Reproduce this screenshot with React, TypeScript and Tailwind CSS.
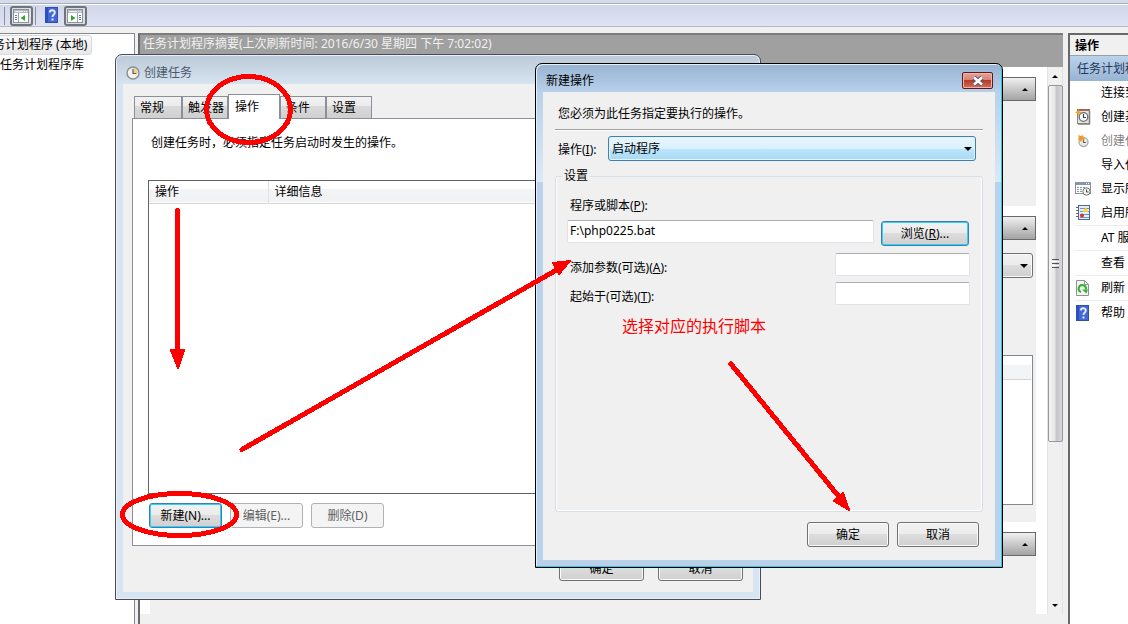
import { useState } from 'react'
import type { ReactNode } from 'react'
import clsx from 'clsx'

const TABS = [
  { name: '常规', width: 'w-12' },
  { name: '触发器', width: 'w-[46px]' },
  { name: '操作', width: 'w-[52px]' },
  { name: '条件', width: 'w-[46px]' },
  { name: '设置', width: 'w-[46px]' },
]

/* ---------- icons ---------- */

function ClockIcon() {
  return (
    <svg width="14" height="14" viewBox="0 0 14 14" fill="none">
      <circle cx="7" cy="7" r="6" fill="#f3f1ea" stroke="#8a8d90" strokeWidth="1.4" />
      <path d="M7 7V2a5 5 0 0 1 5 5z" fill="#f5cf85" />
      <path d="M7 3v4.5h3.5" stroke="#55606b" strokeWidth="1.2" />
    </svg>
  )
}

function HelpIcon() {
  return (
    <svg width="14" height="17" viewBox="0 0 14 17" fill="none">
      <rect x="0.5" y="0.5" width="12" height="15" fill="#4567d6" stroke="#2f4ea8" />
      <rect x="0" y="0" width="3" height="16" fill="#2a50c0" />
      <path d="M4.8 5.6C4.8 2.4 9.800 2.500 9.800 5.400c0 2.300-2.400 2.300-2.400 4.600" stroke="#e6ecff" strokeWidth="1.900" />
      <rect x="6.500" y="11.500" width="2" height="2" fill="#e6ecff" />
    </svg>
  )
}

function PaneIcon({ side }: { side: 'left' | 'right' }) {
  const left = side === 'left'
  return (
    <svg width="17" height="14" viewBox="0 0 17 14" fill="none">
      <rect x="0.5" y="0.5" width="15" height="13" fill="#fff" stroke="#8c9196" />
      <rect x="1" y="1" width="14" height="3" fill="#b5babf" />
      <path d="M2 2.500h8M11 2.500h1M13 2.500h1" stroke="#eef1f3" />
      <path d={left ? 'M5.500 4v9' : 'M10.500 4v9'} stroke="#9aa0a5" />
      <path d={left ? 'M2 6.500h2M2 8.500h2M2 10.500h2' : 'M12 6.500h2M12 8.500h2M12 10.500h2'} stroke="#4a7ab5" />
      <path d={left ? 'M12 6v6L7.500 9z' : 'M4 6v6l4.500-3z'} fill="#35a82b" />
    </svg>
  )
}

function BasicTaskIcon() {
  return (
    <svg width="16" height="16" viewBox="0 0 16 16" fill="none">
      <rect x="2.500" y="1.500" width="12" height="13" fill="#e9e5e2" stroke="#8b8583" />
      <path d="M2 1h13" stroke="#a0675d" strokeWidth="2" />
      <path d="M14.500 2v13M3 15h12" stroke="#857d7a" strokeWidth="1.500" />
      <circle cx="8.500" cy="8" r="4.300" fill="#fff" stroke="#66707a" strokeWidth="1.300" />
      <path d="M8.500 5v3.500H11" stroke="#3c454e" strokeWidth="1.200" />
      <path d="M3.500 0l1 2.300L7 3.500l-2.500 1L3.500 7l-1-2.500L0 3.500l2.500-1.200z" fill="#f6a623" />
    </svg>
  )
}

function NewTaskIcon() {
  return (
    <svg width="16" height="16" viewBox="0 0 16 16" fill="none">
      <circle cx="8.500" cy="9" r="4.500" fill="#f3ead2" stroke="#a3b3c2" strokeWidth="1.400" />
      <path d="M8.500 6.500v3H11" stroke="#5f6a74" strokeWidth="1.200" />
      <path d="M3 2l3 1L8 2l.5 2.500 2 1.500-3 .5L6 9 4.500 7 3 6.500l.8-2z" fill="#f2982a" />
    </svg>
  )
}

function ShowTasksIcon() {
  return (
    <svg width="16" height="14" viewBox="0 0 16 14" fill="none">
      <rect x="0.500" y="0.500" width="15" height="11" fill="#fff" stroke="#8b9298" />
      <rect x="0" y="0" width="16" height="3" fill="#8796a8" />
      <path d="M11 1.500h1M13 1.500h1" stroke="#fff" />
      <path d="M2 5.500h2m1 0h2m1 0h2M2 7.500h2m1 0h2M2 9.500h2m1 0h2" stroke="#8d959c" />
      <circle cx="11.500" cy="9.500" r="3.700" fill="#f4f1e4" stroke="#6d7983" />
      <path d="M11.500 7.500v2.500h2" stroke="#44505a" />
    </svg>
  )
}

function HistoryIcon() {
  return (
    <svg width="14" height="16" viewBox="0 0 14 16" fill="none">
      <rect x="2.500" y="0.500" width="11" height="14" fill="#e4effb" stroke="#47699c" />
      <path d="M4 3.500h9M4 6.500h9M4 9.500h9M4 12.500h9" stroke="#6f95c8" />
      <path d="M0 2.500h3M0 5.500h3M0 8.500h3M0 11.500h3" stroke="#666" />
      <path d="M9.500 2l3 5h-6z" fill="#f5d327" />
      <circle cx="6" cy="10.500" r="2" fill="#d8352f" />
    </svg>
  )
}

function RefreshIcon() {
  return (
    <svg width="14" height="16" viewBox="0 0 14 16" fill="none">
      <path d="M0.500 0.500h8l4 4v11h-12z" fill="#f5f7f5" stroke="#8d9193" />
      <path d="M8.500 0.500v4h4" stroke="#95999b" />
      <path d="M5 12A3.600 3.600 0 1 1 9.800 9.500" stroke="#2fb02a" strokeWidth="2" />
      <path d="M6 9.500h6l-1.500 4z" fill="#2fb02a" />
    </svg>
  )
}

function Triangle({ up, small }: { up?: boolean; small?: boolean }) {
  return (
    <svg width={small ? 6 : 8} height={small ? 3 : 4} viewBox="0 0 8 4" className="shrink-0">
      <path d={up ? 'M0 4l4-4 4 4z' : 'M0 0h8L4 4z'} fill="#000" />
    </svg>
  )
}

/* ---------- small controls ---------- */

interface WinButtonProps {
  children: ReactNode
  className?: string
  label?: string
  focused?: boolean
  disabled?: boolean
}

function WinButton({ children, className, label, focused, disabled }: WinButtonProps) {
  return (
    <button
      type="button"
      aria-label={label}
      disabled={disabled}
      className={clsx(
        'h-[25px] shrink-0 rounded-[3px] border text-center leading-4',
        disabled && 'border-[#adb2b5] bg-[#f4f4f4] text-[#5f5f5f]',
        !disabled && 'bg-[linear-gradient(#f2f2f2,#ebebeb_50%,#dddddd_50%,#cfcfcf)]',
        !disabled && !focused && 'border-[#707070] shadow-[inset_0_0_0_1px_#fafafa]',
        focused && 'border-[#3c7fb1] shadow-[inset_0_0_0_1px_#2fd0fb]',
        className,
      )}
    >
      {children}
    </button>
  )
}

function TextBox({ id, value, className }: { id: string; value?: string; className?: string }) {
  return (
    <input
      id={id}
      type="text"
      defaultValue={value}
      className={clsx(
        'h-[23px] min-w-0 rounded-[2px] border border-[#e2e3ea] border-t-[#abadb3] bg-white px-[2px] pb-[2px] leading-4 outline-none',
        className,
      )}
    />
  )
}

function SectionHeader() {
  return (
    <button
      type="button"
      aria-label="折叠"
      className="flex h-6 w-full items-center justify-end border border-[#696969] bg-[linear-gradient(#f0f0f0,#a3a3a3)] pr-[7px]"
    >
      <Triangle up small />
    </button>
  )
}

/* ---------- main window ---------- */

function Toolbar() {
  const toggle =
    'flex h-5 w-[23px] items-center justify-center rounded-[3px] border-2 border-[#70747c] bg-[#dcdfe6]'
  return (
    <header className="flex h-[33px] shrink-0 flex-col">
      <div className="h-1 border-b border-[#a9adbb] bg-[#d6dbec]" />
      <div className="flex h-[23px] items-center border-t border-b border-t-white border-b-[#b3b7c8] bg-[linear-gradient(#d1d6ea,#dfe3f3)] pl-1">
        <div className="h-[18px] w-px bg-[#8b8f99]" />
        <button type="button" aria-label="显示控制台树" className={clsx(toggle, 'ml-[5px]')}>
          <PaneIcon side="left" />
        </button>
        <div className="ml-[2px] h-[18px] w-px bg-[#8b8f99]" />
        <button type="button" aria-label="帮助" className="ml-[9px]">
          <HelpIcon />
        </button>
        <button type="button" aria-label="显示操作窗格" className={clsx(toggle, 'ml-[5px]')}>
          <PaneIcon side="right" />
        </button>
      </div>
    </header>
  )
}

function TreePane() {
  return (
    <nav className="w-[135px] shrink-0 overflow-hidden border-t border-r border-[#828790] bg-white whitespace-nowrap">
      <ul>
        <li className="mt-px -ml-5 flex h-5 w-[112px] items-center rounded-[3px] border border-[#dadada] bg-[linear-gradient(#fafafa,#e8e8e8)] leading-4">
          任务计划程序 (本地)
        </li>
        <li className="flex h-5 items-center leading-4">任务计划程序库</li>
      </ul>
    </nav>
  )
}

function ScrollBar() {
  return (
    <div className="flex w-4 shrink-0 flex-col items-center border-r border-l border-[#e3e3e3] bg-[#f0f0f0]">
      <div className="flex h-[18px] items-center">
        <Triangle up small />
      </div>
      <div className="flex h-[357px] w-[15px] flex-col items-center justify-center gap-px rounded-[2px] border border-[#979797] bg-[linear-gradient(90deg,#f4f4f4,#e6e6e6_45%,#c6c6ca_55%,#d8d8dc)]">
        <div className="h-px w-[7px] bg-[#555]" />
        <div className="h-px w-[7px] bg-[#fff]" />
        <div className="h-px w-[7px] bg-[#555]" />
        <div className="h-px w-[7px] bg-[#fff]" />
        <div className="h-px w-[7px] bg-[#555]" />
      </div>
      <div className="flex flex-1 items-end pb-[7px]">
        <Triangle small />
      </div>
    </div>
  )
}

function SummaryPane() {
  return (
    <main className="ml-[3px] flex min-w-0 flex-1 flex-col border-t-2 border-l-2 border-[#696969] border-t-[#7d7d7d]">
      <h1 className="flex h-8 shrink-0 items-start bg-[#a0a0a0] pt-px pl-[3px] leading-4 whitespace-nowrap text-[#f0f0f0]">
        任务计划程序摘要(上次刷新时间: 2016/6/30 星期四 下午 7:02:02)
      </h1>
      <div className="mb-[10px] flex min-h-0 flex-1 bg-white">
        <div className="mr-[11px] ml-[10px] flex min-w-0 flex-1 flex-col pt-[10px]">
          <SectionHeader />
          <div className="mb-[10px] h-[105px] bg-[#f0f0f0]" />
          <SectionHeader />
          <div className="mb-[10px] flex h-[282px] flex-col items-end bg-[#f0f0f0] pt-[13px] pr-[3px]">
            <WinButton label="时间范围" className="flex w-32 items-center justify-end pr-1">
              <Triangle />
            </WinButton>
            <div className="mt-[77px] h-[150px] w-full border border-[#828790] bg-white p-px">
              <div className="mt-2 h-[15px] border-b border-[#d5d5d5] bg-[#f2f4f6]" />
            </div>
          </div>
          <SectionHeader />
          <div className="flex-1 bg-[#f0f0f0]" />
        </div>
        <ScrollBar />
      </div>
    </main>
  )
}

interface ActionRow {
  label: string
  icon?: ReactNode
  dim?: boolean
  line?: boolean
}

const ACTIONS: ActionRow[] = [
  { label: '连接到另一台计算机...' },
  { label: '创建基本任务...', icon: <BasicTaskIcon /> },
  { label: '创建任务...', icon: <NewTaskIcon />, dim: true },
  { label: '导入任务...' },
  { label: '显示所有正在运行的任务', icon: <ShowTasksIcon /> },
  { label: '启用所有任务历史记录', icon: <HistoryIcon /> },
  { label: 'AT 服务帐户配置', line: true },
  { label: '查看', line: true },
  { label: '刷新', icon: <RefreshIcon />, line: true },
  { label: '帮助', icon: <HelpIcon />, line: true },
]

function ActionsPane() {
  return (
    <aside className="ml-[5px] w-[60px] shrink-0 overflow-hidden border-t-2 border-l-2 border-[#696969] bg-white whitespace-nowrap">
      <h2 className="flex h-[21px] items-center border-b border-[#a0a0a0] bg-[#f0f0f0] pt-px pl-[5px] leading-4 font-bold">
        操作
      </h2>
      <div className="flex h-[25px] items-center bg-[linear-gradient(#bad2ec,#98b4d4)] pt-px pl-[7px] leading-4 text-[#1e395b]">
        任务计划程序
      </div>
      <ul className="pl-[5px]">
        {ACTIONS.map((a) => (
          <li key={a.label} className={clsx('flex items-center', a.line ? 'h-[25px] border-t border-[#ececec]' : 'h-6')}>
            <span className="flex w-4 shrink-0 justify-center">{a.icon}</span>
            <a href="#" className={clsx('ml-[10px] leading-4', a.dim ? 'text-[#838383]' : 'text-black')}>
              {a.label}
            </a>
          </li>
        ))}
      </ul>
    </aside>
  )
}

/* ---------- dialogs ---------- */

function CreateTaskDialog() {
  const [active, setActive] = useState('操作')

  return (
    <section
      aria-label="创建任务"
      className="absolute top-[54px] left-[115px] w-[646px] rounded-t-[7px] border border-[#4b4b55] bg-[linear-gradient(#bccad8,#d7e4f2_30px)] px-[7px] pb-[7px] shadow-[inset_0_0_0_1px_#e9f0f7]"
    >
      <div className="flex h-[29px] items-center gap-1 pt-[7px] pl-[3px] leading-4 text-[#4b5a6b]">
        <ClockIcon />
        创建任务
      </div>
      <div className="bg-[#f0f0f0] px-[9px] pt-[10px] pb-[11px]">
        <div role="tablist" className="ml-[2px] flex h-6 items-end">
          {TABS.map((t) => (
            <button
              key={t.name}
              type="button"
              role="tab"
              aria-selected={active === t.name}
              onClick={() => setActive(t.name)}
              className={clsx(
                'border border-[#8c8e9a] text-left leading-4 whitespace-nowrap',
                t.width,
                active === t.name
                  ? '-mb-px h-[25px] border-b-0 bg-white pb-px pl-[6px]'
                  : 'h-[22px] border-b-0 bg-[linear-gradient(#f2f2f2,#ebebeb_45%,#dadada_45%,#cfcfcf)] pl-[5px]',
              )}
            >
              {t.name}
            </button>
          ))}
        </div>
        <div className="border border-[#8c8e9a] bg-white px-[15px] pt-4 pb-[17px]">
          <p className="pl-[3px] leading-4">创建任务时，必须指定任务启动时发生的操作。</p>
          <div className="mt-[29px] h-[314px] border border-[#646464]">
            <table className="w-full table-fixed border-collapse text-left">
              <thead>
                <tr className="h-[22px] border-b border-[#d5d5d5] bg-[linear-gradient(#fff_40%,#f3f4f6_40%,#f1f2f4)]">
                  <th className="w-[119px] border-r border-[#e0e3e6] pt-px pl-[6px] leading-4 font-normal">操作</th>
                  <th className="pt-px pl-[6px] leading-4 font-normal">详细信息</th>
                </tr>
              </thead>
            </table>
          </div>
          <div className="mt-[9px] flex gap-2 pl-px">
            <WinButton focused className="w-[73px]">新建(N)...</WinButton>
            <WinButton disabled className="w-[73px]">编辑(E)...</WinButton>
            <WinButton disabled className="w-[73px]">删除(D)</WinButton>
          </div>
        </div>
        <div className="mt-[10px] flex justify-end gap-[14px] pr-px">
          <WinButton className="w-[85px]">确定</WinButton>
          <WinButton className="w-[85px]">取消</WinButton>
        </div>
      </div>
    </section>
  )
}

function NewActionDialog() {
  return (
    <section
      aria-label="新建操作"
      className="absolute top-[63px] left-[535px] w-[468px] rounded-t-[7px] border border-black bg-[linear-gradient(#98b3d2,#b9d1ea_29px,#dce8f6_118px,#b9d1ea_118px)] px-[7px] pb-[7px] shadow-[inset_-1px_-1px_0_#2bc8e6,inset_1px_1px_0_#e6f0fa]"
    >
      <div className="flex h-7 items-end justify-between pr-[2px] pb-[3px] pl-[3px] leading-4">
        新建操作
        <button
          type="button"
          aria-label="关闭"
          className="flex h-[17px] w-[31px] items-center justify-center rounded-[2px] border border-[#5c1a1e] bg-[linear-gradient(#e6a498,#d98274_45%,#b83a28_50%,#d3705c)] shadow-[inset_0_0_0_1px_#eab5ab]"
        >
          <svg width="12" height="10" viewBox="0 0 12 10" fill="none">
            <path d="M2 1.500l8 7M10 1.500l-8 7" stroke="#535666" strokeWidth="4.500" />
            <path d="M2 1.500l8 7M10 1.500l-8 7" stroke="#fff" strokeWidth="2.600" />
          </svg>
        </button>
      </div>
      <form className="bg-[#f0f0f0] px-3 pt-[14px] pb-[13px]" onSubmit={(e) => e.preventDefault()}>
        <p className="pl-[3px] leading-4">您必须为此任务指定要执行的操作。</p>
        <hr className="mt-[7px] h-[2px] border-0 border-t border-b border-t-[#a0a0a0] border-b-white" />
        <div className="mt-[5px] flex items-center pr-[7px] pl-[3px]">
          <label htmlFor="action" className="w-[50px] pt-[2px] leading-4">
            操作(<u>I</u>):
          </label>
          <div className="relative flex-1">
            <select
              id="action"
              defaultValue="启动程序"
              className="block h-[25px] w-full appearance-none rounded-[3px] border border-[#3c7fb1] bg-[linear-gradient(#eaf6fd,#d9f0fc_50%,#bee6fd_50%,#a7d9f5)] pl-[3px] leading-4 shadow-[inset_0_0_0_1px_#e3f4fc] outline-none"
            >
              <option>启动程序</option>
            </select>
            <div className="pointer-events-none absolute inset-y-0 right-1 flex items-center">
              <Triangle />
            </div>
          </div>
        </div>
        <fieldset className="mt-[7px] h-[344px] rounded-[3px] border border-[#d5dfe5] pr-3 pl-[11px] shadow-[inset_0_-1px_0_#fff,inset_-1px_0_0_#fff,inset_1px_0_0_#fff]">
          <legend className="-ml-[5px] px-[2px] leading-4">设置</legend>
          <label htmlFor="program" className="mt-[14px] block pl-[3px] leading-4">
            程序或脚本(<u>P</u>):
          </label>
          <div className="mt-[6px] flex items-end gap-[7px] pr-px">
            <TextBox id="program" value="F:\php0225.bat" className="mb-[3px] flex-1" />
            <WinButton focused className="w-[88px]">
              浏览(<u>R</u>)...
            </WinButton>
          </div>
          <div className="mt-[7px] flex flex-col gap-[6px]">
            <div className="flex items-end justify-between pl-[3px]">
              <label htmlFor="args" className="leading-4">
                添加参数(可选)(<u>A</u>):
              </label>
              <TextBox id="args" className="w-[135px]" />
            </div>
            <div className="flex items-end justify-between pl-[3px]">
              <label htmlFor="start" className="leading-4">
                起始于(可选)(<u>T</u>):
              </label>
              <TextBox id="start" className="w-[135px]" />
            </div>
          </div>
        </fieldset>
        <div className="mt-[10px] flex justify-end gap-2 pr-1">
          <WinButton className="w-[82px]">确定</WinButton>
          <WinButton className="w-[82px]">取消</WinButton>
        </div>
      </form>
    </section>
  )
}

// red marker strokes drawn over the two dialogs
function Annotations() {
  return (
    <div className="pointer-events-none absolute inset-0 text-[#f00]">
      <svg
        width="1128"
        height="624"
        viewBox="0 0 1128 624"
        fill="none"
        stroke="currentColor"
        strokeWidth="5"
        strokeLinecap="round"
        strokeLinejoin="round"
        shapeRendering="crispEdges"
      >
        <ellipse cx="248.500" cy="109.500" rx="42" ry="33" />
        <ellipse cx="179.500" cy="514.500" rx="57" ry="21" />
        <path d="M177.500 210.500V355M242 449.500L560 268M731 364L840 498" />
        <g fill="currentColor" strokeWidth="2">
          <path d="M171 350h13l-6 18z" />
          <path d="M553 263l17-2-11 13z" />
          <path d="M834 501l9-8 6 17z" />
        </g>
      </svg>
      <p className="absolute top-[314px] left-[622px] text-base leading-6">选择对应的执行脚本</p>
    </div>
  )
}

export default function App() {
  return (
    <div className="relative flex h-screen flex-col overflow-hidden bg-[#f0f0f0] font-['Noto_Sans','Noto_Sans_CJK_SC',sans-serif] text-xs text-black">
      <Toolbar />
      <div className="flex min-h-0 flex-1">
        <TreePane />
        <SummaryPane />
        <ActionsPane />
      </div>
      <CreateTaskDialog />
      <NewActionDialog />
      <Annotations />
    </div>
  )
}
